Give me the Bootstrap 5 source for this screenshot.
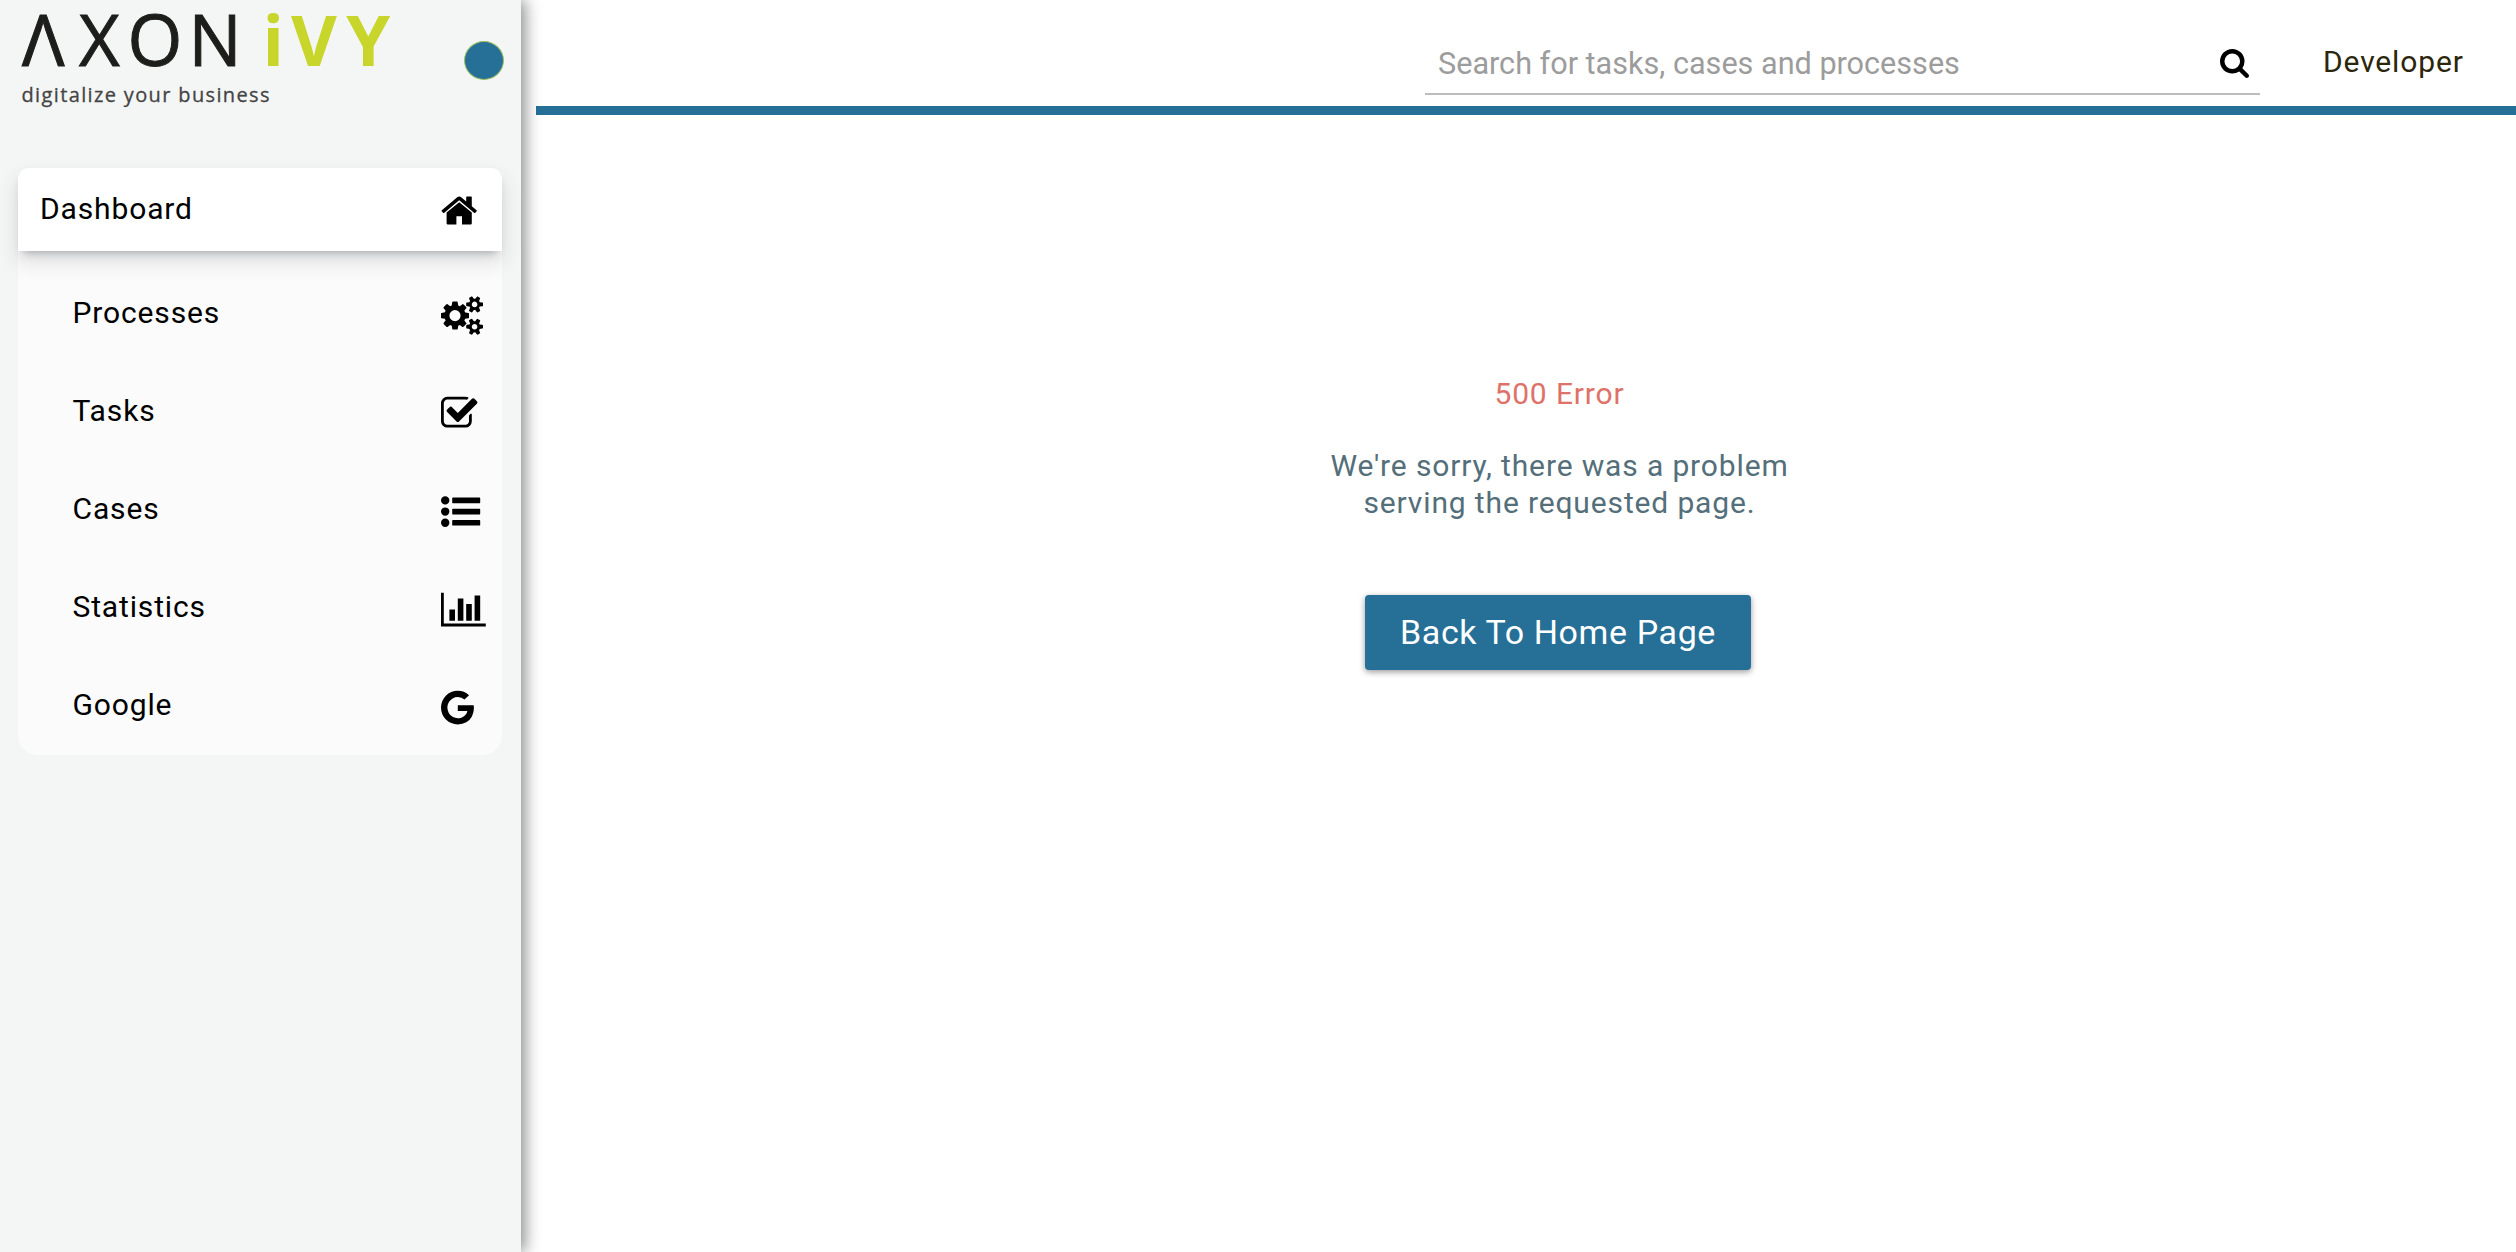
<!DOCTYPE html>
<html lang="en">
<head>
<meta charset="utf-8">
<title>Axon Ivy Portal</title>
<link href="https://cdn.jsdelivr.net/npm/bootstrap@5.3.0/dist/css/bootstrap.min.css" rel="stylesheet">
<style>
body{font-family:Roboto,sans-serif;font-size:30px;line-height:37px;letter-spacing:.86px;color:#000;background:#fff}
.sidebar{width:521px;background:#f4f6f5;box-shadow:4px 0 15px rgba(0,0,0,.45);z-index:2;padding:0 19px 0 18px}
.brandrow{height:168px;padding-top:41px;margin-right:-2px}
.logo{width:390px;height:120px;margin-top:-41px;margin-left:-18px}
.pin{width:40px;height:39px;border-radius:50%;background:#266f96;border:1px solid #9fbf6a}
.menu-top{height:83px;background:#fff;border-radius:11px 11px 0 0;padding:0 0 0 22px;box-shadow:0 10px 20px rgba(50,54,64,.16),0 6px 8px -5px rgba(50,54,64,.34);z-index:1}
.menu-sub{background:#fbfbfb;border-radius:0 0 20px 20px;padding-top:14px}
.menu-sub .menu-row{height:98px;padding-left:54.5px}
.menu-label{padding-bottom:3px}
.ico{width:39.2px;height:39.2px;overflow:visible;fill:#000;display:block;flex:none}
.menu-ico{width:61.2px;padding-top:3px}
main{min-width:0}
.topbar{height:115px;margin-left:15px;border-bottom:9px solid #266f96}
.searchbox{width:835px;height:63px;margin-top:32px;border-bottom:2px solid #bdbdbd;padding:0 11px 0 13px}
.searchbox input{background:none;border:0;outline:0;padding:1px 0 0;font-size:30.6px;letter-spacing:0;color:#999}
.searchbox input::placeholder{color:#9c9c9c;opacity:1}
.search-ico{margin-top:2px}
.user{color:#2b260c;width:256px;padding:43px 0 0 63px}
.err{padding:260px 0 0 79px}
.err-title{color:#de7268;padding-left:3px}
.err-text{color:#546e7a;margin-top:35px;padding-left:3px}
.btn-home{--bs-btn-color:#fff;--bs-btn-bg:#266f96;width:386px;height:75px;margin-top:74px;border:0;border-radius:4px;padding:6px 12px 8px;font-size:34px;letter-spacing:.6px;line-height:40px;box-shadow:0 2px 6px rgba(0,0,0,.4)}
</style>
</head>
<body>
<div class="d-flex vh-100 overflow-hidden">
  <aside class="sidebar flex-shrink-0 position-relative">
    <div class="brandrow d-flex justify-content-between align-items-start">
      <svg class="logo" viewBox="0 0 390 120" font-family="'Open Sans','Noto Sans',sans-serif" letter-spacing="0">
        <text y="66.4" font-size="70.5" fill="#1d1d1b" stroke="#1d1d1b" stroke-width="1" x="22 78.9 127.6 188.6">ΛXON</text>
        <text y="66.4" font-size="70.5" font-weight="700" fill="#c8d52b" x="262.5 291 346.3">iVY</text>
        <text x="21.5" y="101.5" font-size="20" fill="#444" stroke="#444" stroke-width=".3" textLength="248">digitalize your business</text>
      </svg>
      <div class="pin"></div>
    </div>
    <nav>
      <div class="menu-top d-flex align-items-center justify-content-between position-relative">
        <span class="menu-label">Dashboard</span>
        <span class="menu-ico"><svg class="ico" viewBox="64 0 1792 1792"><path d="M1472 992v480q0 26-19 45t-45 19h-384v-384h-256v384h-384q-26 0-45-19t-19-45v-480q0-1 .5-3t.5-3l575-474 575 474q1 2 1 6zm223-69l-62 74q-8 9-21 11h-3q-13 0-21-7l-692-577-692 577q-12 8-24 7-13-2-21-11l-62-74q-8-10-7-23.5t11-21.5l719-599q32-26 76-26t76 26l244 204v-195q0-14 9-23t23-9h192q14 0 23 9t9 23v408l219 182q10 8 11 21.5t-7 23.5z"/></svg></span>
      </div>
      <div class="menu-sub">
        <div class="menu-row d-flex align-items-center justify-content-between"><span class="menu-label">Processes</span><span class="menu-ico"><svg class="ico" viewBox="-64 0 1792 1792"><path d="M832 896q0-106-75-181t-181-75-181 75-75 181 75 181 181 75 181-75 75-181zm768 512q0-52-38-90t-90-38-90 38-38 90q0 53 37.5 90.5t90.5 37.5 90.5-37.5 37.5-90.5zm0-1024q0-52-38-90t-90-38-90 38-38 90q0 53 37.5 90.5t90.5 37.5 90.5-37.5 37.5-90.5zm-384 421v185q0 10-7 19.5t-16 10.5l-155 24q-11 35-32 76 34 48 90 115 7 11 7 20 0 12-7 19-23 30-82.5 89.5t-78.5 59.5q-11 0-21-7l-115-90q-37 19-77 31-11 108-23 155-7 24-30 24h-186q-11 0-20-7.5t-10-17.5l-23-153q-34-10-75-31l-118 89q-7 7-20 7-11 0-21-8-144-133-144-160 0-9 7-19 10-14 41-53t47-61q-23-44-35-82l-152-24q-10-1-17-9.5t-7-19.5v-185q0-10 7-19.5t16-10.5l155-24q11-35 32-76-34-48-90-115-7-11-7-20 0-12 7-20 22-30 82-89t79-59q11 0 21 7l115 90q34-18 77-32 11-108 23-154 7-24 30-24h186q11 0 20 7.5t10 17.5l23 153q34 10 75 31l118-89q8-7 20-7 11 0 21 8 144 133 144 160 0 8-7 19-12 16-42 54t-45 60q23 48 34 82l152 23q10 2 17 10.5t7 19.5zm640 533v140q0 16-149 31-12 27-30 52 51 113 51 138 0 4-4 7-122 71-124 71-8 0-46-47t-52-68q-20 2-30 2t-30-2q-14 21-52 68t-46 47q-2 0-124-71-4-3-4-7 0-25 51-138-18-25-30-52-149-15-149-31v-140q0-16 149-31 13-29 30-52-51-113-51-138 0-4 4-7 4-2 35-20t59-34 30-16q8 0 46 46.5t52 67.5q20-2 30-2t30 2q51-71 92-112l6-2q4 0 124 70 4 3 4 7 0 25-51 138 17 23 30 52 149 15 149 31zm0-1024v140q0 16-149 31-12 27-30 52 51 113 51 138 0 4-4 7-122 71-124 71-8 0-46-47t-52-68q-20 2-30 2t-30-2q-14 21-52 68t-46 47q-2 0-124-71-4-3-4-7 0-25 51-138-18-25-30-52-149-15-149-31v-140q0-16 149-31 13-29 30-52-51-113-51-138 0-4 4-7 4-2 35-20t59-34 30-16q8 0 46 46.5t52 67.5q20-2 30-2t30 2q51-71 92-112l6-2q4 0 124 70 4 3 4 7 0 25-51 138 17 23 30 52 149 15 149 31z"/></svg></span></div>
        <div class="menu-row d-flex align-items-center justify-content-between"><span class="menu-label">Tasks</span><span class="menu-ico"><svg class="ico" viewBox="64 0 1792 1792"><path d="M1472 930v318q0 119-84.5 203.5t-203.5 84.5h-832q-119 0-203.5-84.5t-84.5-203.5v-832q0-119 84.5-203.5t203.5-84.5h832q63 0 117 25 15 7 18 23 3 17-9 29l-49 49q-10 10-23 10-3 0-9-2-23-6-45-6h-832q-66 0-113 47t-47 113v832q0 66 47 113t113 47h832q66 0 113-47t47-113v-254q0-13 9-22l64-64q10-10 23-10 6 0 12 3 20 8 20 29zm231-489l-814 814q-24 24-57 24t-57-24l-430-430q-24-24-24-57t24-57l110-110q24-24 57-24t57 24l263 263 647-647q24-24 57-24t57 24l110 110q24 24 24 57t-24 57z"/></svg></span></div>
        <div class="menu-row d-flex align-items-center justify-content-between"><span class="menu-label">Cases</span><span class="menu-ico"><svg class="ico" viewBox="0 0 1792 1792"><path d="M384 1408q0 80-56 136t-136 56-136-56-56-136 56-136 136-56 136 56 56 136zm0-512q0 80-56 136t-136 56-136-56-56-136 56-136 136-56 136 56 56 136zm1408 416v192q0 13-9.5 22.5t-22.5 9.5h-1216q-13 0-22.5-9.5t-9.5-22.5v-192q0-13 9.5-22.5t22.5-9.5h1216q13 0 22.5 9.5t9.5 22.5zm-1408-928q0 80-56 136t-136 56-136-56-56-136 56-136 136-56 136 56 56 136zm1408 416v192q0 13-9.5 22.5t-22.5 9.5h-1216q-13 0-22.5-9.5t-9.5-22.5v-192q0-13 9.5-22.5t22.5-9.5h1216q13 0 22.5 9.5t9.5 22.5zm0-512v192q0 13-9.5 22.5t-22.5 9.5h-1216q-13 0-22.5-9.5t-9.5-22.5v-192q0-13 9.5-22.5t22.5-9.5h1216q13 0 22.5 9.5t9.5 22.5z"/></svg></span></div>
        <div class="menu-row d-flex align-items-center justify-content-between"><span class="menu-label">Statistics</span><span class="menu-ico"><svg class="ico" viewBox="0 0 1792 1792"><path d="M640 896v512h-256v-512h256zm384-512v1024h-256v-1024h256zm1024 1152v128h-2048v-1536h128v1408h1920zm-640-896v768h-256v-768h256zm384-384v1152h-256v-1152h256z"/></svg></span></div>
        <div class="menu-row d-flex align-items-center justify-content-between"><span class="menu-label">Google</span><span class="menu-ico"><svg class="ico" viewBox="128 0 1792 1792"><path d="M896 786h725q12 67 12 128 0 217-91 387.5t-259.5 266.5-386.5 96q-157 0-299-60.5t-245-163.5-163.5-245-60.5-299 60.5-299 163.5-245 245-163.5 299-60.5q300 0 515 201l-209 201q-123-119-306-119-129 0-238.5 65t-173.5 176.5-64 243.5 64 243.5 173.5 176.5 238.5 65q87 0 160-24t120-60 82-82 51.5-87 22.5-78h-436v-264z"/></svg></span></div>
      </div>
    </nav>
  </aside>
  <main class="flex-grow-1">
    <header class="topbar d-flex justify-content-end align-items-start">
      <div class="searchbox d-flex align-items-center">
        <input class="flex-grow-1" type="text" placeholder="Search for tasks, cases and processes">
        <svg class="search-ico flex-shrink-0" width="29" height="29" viewBox="64 128 1664 1664"><path d="M1216 832q0-185-131.5-316.5t-316.5-131.5-316.5 131.5-131.5 316.5 131.5 316.5 316.5 131.5 316.5-131.5 131.5-316.5zm512 832q0 52-38 90t-90 38q-54 0-90-38l-343-342q-179 124-399 124-143 0-273.5-55.5t-225-150-150-225-55.5-273.5 55.5-273.5 150-225 225-150 273.5-55.5 273.5 55.5 225 150 150 225 55.5 273.5q0 220-124 399l343 343q37 37 37 90z"/></svg>
      </div>
      <div class="user">Developer</div>
    </header>
    <section class="err d-flex flex-column align-items-center text-center">
      <div class="err-title">500 Error</div>
      <div class="err-text">We're sorry, there was a problem<br>serving the requested page.</div>
      <button class="btn btn-home" type="button">Back To Home Page</button>
    </section>
  </main>
</div>
<script src="https://cdn.jsdelivr.net/npm/bootstrap@5.3.0/dist/js/bootstrap.bundle.min.js"></script>
</body>
</html>
